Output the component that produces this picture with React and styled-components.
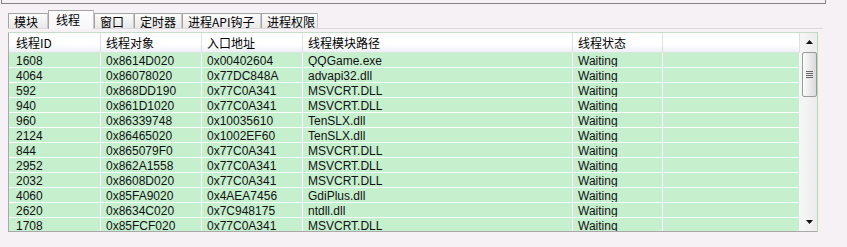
import React from "react";
import styled, { createGlobalStyle } from "styled-components";

const Global = createGlobalStyle`
  html, body { margin: 0; padding: 0; background: #f5f1f4; }
  body { font-family: "Liberation Sans", "Noto Sans CJK SC", sans-serif; font-size: 12px; color: #000; }
`;

const Page = styled.div`
  width: 847px;
  height: 247px;
  overflow: hidden;
  display: flex;
  flex-direction: column;
`;

const TopBox = styled.div`
  margin-left: 1px;
  width: 823px;
  height: 3px;
  border: 1px solid #858585;
  border-top: none;
`;

const TabStrip = styled.div`
  margin-top: 6px;
  margin-left: 8px;
  width: 815px;
  height: 19px;
  display: flex;
  align-items: flex-end;
  border-bottom: 1px solid #dcd9dc;
  box-sizing: border-box;
`;

const Tab = styled.div`
  box-sizing: border-box;
  width: ${(p) => p.$w}px;
  height: ${(p) => (p.$active ? 19 : 15)}px;
  margin-bottom: ${(p) => (p.$active ? -1 : 0)}px;
  border: 1px solid #a3a3a3;
  border-bottom: none;
  border-right-color: #c8c8c8;
  background: ${(p) =>
    p.$active
      ? "linear-gradient(#fdfdfe, #f7f7f9)"
      : "linear-gradient(#fbfbfb, #e9e9ea)"};
  font-family: "Noto Sans CJK SC", "Liberation Sans", sans-serif;
  font-size: 12px;
  line-height: ${(p) => (p.$active ? 17 : 15)}px;
  padding-left: ${(p) => (p.$active ? 7 : 5)}px;
  white-space: nowrap;
  color: #000;
`;

const List = styled.div`
  margin-top: 3px;
  margin-left: 8px;
  width: 810px;
  height: 200px;
  box-sizing: border-box;
  border: 1px solid #a9a9a9;
  border-top-color: #c5dcc8;
  border-right-color: #b4dbb8;
  background: #c6efce;
  display: flex;
  overflow: hidden;
`;

const Grid = styled.div`
  flex: 1;
  display: flex;
  flex-direction: column;
  overflow: hidden;
`;

const cols = "92px 101px 101px 270px 90px 1fr";

const Header = styled.div`
  display: grid;
  grid-template-columns: ${cols};
  height: 20px;
  flex: none;
  background: linear-gradient(#ffffff, #ffffff 60%, #eef0f7);
  border-bottom: 1px solid #d9e6dc;
  box-sizing: border-box;
`;

const HeadCell = styled.div`
  font-family: "Noto Sans CJK SC", "Liberation Sans", sans-serif;
  font-size: 12px;
  line-height: 19px;
  padding-left: ${(p) => (p.$first ? 7 : 5)}px;
  border-right: 1px solid #dedfe6;
  white-space: nowrap;
  overflow: hidden;
`;

const Row = styled.div`
  display: grid;
  grid-template-columns: ${cols};
  height: 15px;
  flex: none;
  border-bottom: 1px solid #ffffff;
  box-sizing: border-box;
`;

const Cell = styled.div`
  font-size: 12px;
  line-height: 14px;
  padding-top: 1px;
  padding-left: ${(p) => (p.$first ? 7 : 5)}px;
  border-right: 1px solid #ffffff;
  white-space: nowrap;
  overflow: hidden;
  color: #111;
`;

const Scroll = styled.div`
  width: 16px;
  flex: none;
  display: flex;
  flex-direction: column;
  align-items: center;
  background: linear-gradient(90deg, #f6f6f6, #ececec);
  border-left: 1px solid #f4f4f4;
`;

const ArrowBox = styled.div`
  height: 18px;
  width: 16px;
  display: flex;
  align-items: center;
  justify-content: center;
  flex: none;
`;

const Thumb = styled.div`
  box-sizing: border-box;
  width: 15px;
  height: 45px;
  margin-top: 1px;
  border: 1px solid #9a9a9a;
  border-radius: 2px;
  background: linear-gradient(90deg, #fbfbfb, #dadada);
  display: flex;
  flex-direction: column;
  align-items: center;
  justify-content: center;
  gap: 1px;
  flex: none;
`;

const Grip = styled.div`
  width: 7px;
  height: 1px;
  background: #666;
`;

const Spacer = styled.div`
  flex: 1;
`;

const tabs = [
  { t: "模块", w: 40 },
  { t: "线程", w: 46, a: true },
  { t: "窗口", w: 40 },
  { t: "定时器", w: 48 },
  { t: "进程API钩子", w: 79 },
  { t: "进程权限", w: 57 },
];

const rows = [
  ["1608", "0x8614D020", "0x00402604", "QQGame.exe"],
  ["4064", "0x86078020", "0x77DC848A", "advapi32.dll"],
  ["592", "0x868DD190", "0x77C0A341", "MSVCRT.DLL"],
  ["940", "0x861D1020", "0x77C0A341", "MSVCRT.DLL"],
  ["960", "0x86339748", "0x10035610", "TenSLX.dll"],
  ["2124", "0x86465020", "0x1002EF60", "TenSLX.dll"],
  ["844", "0x865079F0", "0x77C0A341", "MSVCRT.DLL"],
  ["2952", "0x862A1558", "0x77C0A341", "MSVCRT.DLL"],
  ["2032", "0x8608D020", "0x77C0A341", "MSVCRT.DLL"],
  ["4060", "0x85FA9020", "0x4AEA7456", "GdiPlus.dll"],
  ["2620", "0x8634C020", "0x7C948175", "ntdll.dll"],
  ["1708", "0x85FCF020", "0x77C0A341", "MSVCRT.DLL"],
];

const headers = ["线程ID", "线程对象", "入口地址", "线程模块路径", "线程状态", ""];

export default function App() {
  return (
    <Page>
      <Global />
      <TopBox />
      <TabStrip>
        {tabs.map((t) => (
          <Tab key={t.t} $w={t.w} $active={t.a}>
            {t.t}
          </Tab>
        ))}
      </TabStrip>
      <List>
        <Grid>
          <Header>
            {headers.map((h, i) => (
              <HeadCell key={i} $first={i === 0}>
                {h}
              </HeadCell>
            ))}
          </Header>
          {rows.map((r) => (
            <Row key={r[0]}>
              {r.map((c, i) => (
                <Cell key={i} $first={i === 0}>
                  {c}
                </Cell>
              ))}
              <Cell>Waiting</Cell>
              <Cell />
            </Row>
          ))}
        </Grid>
        <Scroll>
          <ArrowBox>
            <svg width="7" height="4" viewBox="0 0 7 4">
              <path d="M3.5 0 L7 4 L0 4 Z" fill="#111" />
            </svg>
          </ArrowBox>
          <Thumb>
            <Grip />
            <Grip />
            <Grip />
            <Grip />
          </Thumb>
          <Spacer />
          <ArrowBox>
            <svg width="7" height="4" viewBox="0 0 7 4">
              <path d="M0 0 L7 0 L3.5 4 Z" fill="#111" />
            </svg>
          </ArrowBox>
        </Scroll>
      </List>
    </Page>
  );
}
